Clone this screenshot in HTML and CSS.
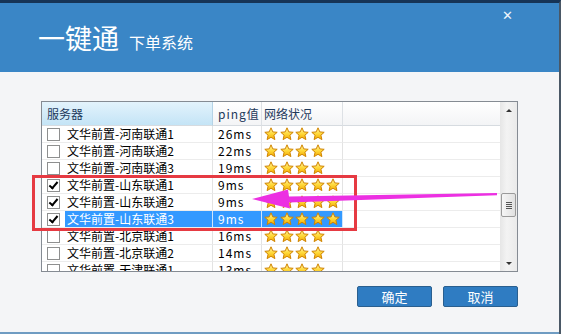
FILE: index.html
```html
<!DOCTYPE html>
<html lang="zh-CN">
<head>
    <meta charset="UTF-8">
    <title>一键通 下单系统</title>
    <link rel="stylesheet" href="styles.css">
</head>
<body>
    <svg width="0" height="0" class="defs">
        <defs>
            <linearGradient id="starFill" x1="0" y1="0" x2="0" y2="1">
                <stop offset="0" stop-color="#fff6a8"/>
                <stop offset="0.5" stop-color="#ffd93a"/>
                <stop offset="1" stop-color="#f2a900"/>
            </linearGradient>
            <symbol id="star" viewBox="0 0 14 14">
                <path d="M7 0.8 L8.8 4.9 L13.2 5.3 L9.9 8.2 L10.9 12.6 L7 10.3 L3.1 12.6 L4.1 8.2 L0.8 5.3 L5.2 4.9 Z" fill="url(#starFill)" stroke="#d08400" stroke-width="1" stroke-linejoin="round"/>
            </symbol>
        </defs>
    </svg>

    <div class="window">
        <div class="titlebar">
            <div class="title">
                <span class="title-main">一键通</span>
                <span class="title-sub">下单系统</span>
            </div>
            <span class="close">&#x2715;</span>
        </div>

        <div class="content">
            <div class="list">
                <div class="list-body">
                    <div class="row head">
                        <div class="cell name sorted">服务器</div>
                        <div class="cell ping">ping值</div>
                        <div class="cell status">网络状况</div>
                        <div class="cell filler"></div>
                    </div>
                    <div id="rows"></div>
                </div>
                <div class="scrollbar">
                    <span class="arrow up"></span>
                    <div class="track">
                        <div class="thumb"><i></i><i></i><i></i><i></i></div>
                    </div>
                    <span class="arrow down"></span>
                </div>
            </div>

            <div class="buttons">
                <button class="button">确定</button>
                <button class="button">取消</button>
            </div>
        </div>

        <div class="highlight"></div>
        <svg class="pointer" width="561" height="334" viewBox="0 0 561 334">
            <polygon points="497,193 497,195.2 289,202.5 290,208.5 252,199 288,189.5 289,196.5" fill="#ec30e2"/>
        </svg>
    </div>

    <script>
        const servers = [
            { name: '文华前置-河南联通1', ping: '26ms', stars: 4, checked: false },
            { name: '文华前置-河南联通2', ping: '22ms', stars: 4, checked: false },
            { name: '文华前置-河南联通3', ping: '19ms', stars: 4, checked: false },
            { name: '文华前置-山东联通1', ping: '9ms', stars: 5, checked: true },
            { name: '文华前置-山东联通2', ping: '9ms', stars: 5, checked: true },
            { name: '文华前置-山东联通3', ping: '9ms', stars: 5, checked: true, selected: true },
            { name: '文华前置-北京联通1', ping: '16ms', stars: 4, checked: false },
            { name: '文华前置-北京联通2', ping: '14ms', stars: 4, checked: false },
            { name: '文华前置-天津联通1', ping: '13ms', stars: 4, checked: false }
        ];

        const rows = document.getElementById('rows');

        servers.forEach(s => {
            const row = document.createElement('div');
            row.className = 'row' + (s.selected ? ' selected' : '');

            let stars = '';
            for (let i = 0; i < s.stars; i++) {
                stars += '<svg class="star"><use href="#star"/></svg>';
            }

            row.innerHTML =
                '<div class="cell name">' +
                    '<span class="check' + (s.checked ? ' on' : '') + '"></span>' +
                    '<span class="label">' + s.name + '</span>' +
                '</div>' +
                '<div class="cell ping">' + s.ping + '</div>' +
                '<div class="cell status">' + stars + '</div>' +
                '<div class="cell filler"></div>';
            rows.appendChild(row);
        });
    </script>
</body>
</html>
```

FILE: styles.css
```css
body {
    margin: 0;
    font-family: "Noto Sans CJK SC", "DejaVu Sans", sans-serif;
    background-color: #1b3550;
}

.defs {
    position: absolute;
}

.window {
    position: relative;
    width: 559px;
    height: 331px;
    border-top: 3px solid #163456;
    border-right: 2px solid #4a5866;
    background-color: #f4f5f7;
    display: flex;
    flex-direction: column;
    overflow: hidden;
}

.window::after {
    content: "";
    position: absolute;
    left: 0;
    right: 0;
    bottom: 0;
    height: 2px;
    background-color: #6f9cc2;
}

.titlebar {
    height: 69px;
    background-color: #3a86c6;
    display: flex;
    justify-content: space-between;
    color: #fff;
}

.title {
    display: flex;
    align-items: baseline;
    gap: 10px;
    padding: 18px 0 0 38px;
}

.title-main {
    font-size: 27px;
    line-height: 34px;
}

.title-sub {
    font-size: 16px;
}

.close {
    font-size: 13px;
    line-height: 13px;
    padding: 5px 46px 0 0;
    color: #eef5fb;
}

.content {
    display: flex;
    flex-direction: column;
    padding: 29px 0 0 41px;
}

.list {
    width: 475px;
    height: 169px;
    border: 1px solid #858b93;
    background-color: #fff;
    display: flex;
    overflow: hidden;
}

.list-body {
    width: 458px;
}

.row {
    display: grid;
    grid-template-columns: 171px 49px 81px 1fr;
    height: 17px;
    font-size: 12px;
    line-height: 16px;
    color: #000;
}

.row.head {
    height: 24px;
    color: #1e395b;
}

.cell {
    display: flex;
    align-items: center;
    border-bottom: 1px solid #ececec;
    border-right: 1px solid #e3e3e3;
    white-space: nowrap;
    overflow: hidden;
}

.head .cell {
    background: linear-gradient(#ffffff, #f3f4f6);
    border-bottom: 1px solid #d6dbe0;
    border-right: 1px solid #dde1e5;
    padding-left: 5px;
}

.head .cell.sorted {
    background: linear-gradient(#e3f3fc, #c4e4f6);
    border-right-color: #b5d3e6;
}

.head .ping {
    padding-left: 4px;
}

.cell.filler {
    border-right: none;
}

.row .name {
    padding-left: 5px;
}

.check {
    width: 11px;
    height: 11px;
    border: 1px solid #8e8f8f;
    background-color: #fff;
    margin-right: 5px;
    position: relative;
    flex-shrink: 0;
}

.check.on::after {
    content: "";
    position: absolute;
    left: 3px;
    top: 0;
    width: 3px;
    height: 7px;
    border: solid #000;
    border-width: 0 2px 2px 0;
    transform: rotate(40deg);
}

.label {
    height: 16px;
    padding: 0 2px;
}

.row .ping {
    padding-left: 5px;
    letter-spacing: 1px;
}

.row .status {
    padding-left: 2px;
    gap: 1.5px;
}

.star {
    width: 14px;
    height: 14px;
    flex-shrink: 0;
}

.row.selected .label {
    background-color: #3399ff;
    color: #fff;
    flex: 1;
    margin-right: -1px;
}

.row.selected .ping,
.row.selected .status {
    background-color: #3399ff;
    color: #fff;
    border-right-color: #cfe5fb;
}

.row.selected .ping {
    border-left: 1px solid #cfe5fb;
    margin-left: -1px;
}

.scrollbar {
    width: 17px;
    display: flex;
    flex-direction: column;
    align-items: center;
    background: linear-gradient(90deg, #e6e6e6, #f3f3f3 40%, #eaeaea);
}

.arrow {
    height: 16px;
    width: 17px;
    display: flex;
    align-items: center;
    justify-content: center;
}

.arrow::before {
    content: "";
    border-left: 3px solid transparent;
    border-right: 3px solid transparent;
}

.arrow.up::before {
    border-bottom: 3px solid #333;
}

.arrow.down::before {
    border-top: 3px solid #333;
}

.track {
    flex: 1;
    width: 17px;
    padding-top: 75px;
    display: flex;
    justify-content: center;
}

.thumb {
    width: 13px;
    height: 22px;
    border: 1px solid #9a9a9a;
    border-radius: 2px;
    background: linear-gradient(90deg, #f6f6f6, #e0e0e0);
    display: flex;
    flex-direction: column;
    align-items: center;
    justify-content: center;
    gap: 1px;
}

.thumb i {
    width: 6px;
    height: 1px;
    background-color: #555;
}

.buttons {
    display: flex;
    justify-content: flex-end;
    gap: 11px;
    width: 477px;
    margin-top: 14px;
}

.button {
    width: 75px;
    height: 21px;
    border: 1px solid #2a5f8f;
    border-radius: 2px;
    background-color: #2f7cc2;
    color: #fff;
    font-family: "Noto Sans CJK SC", sans-serif;
    font-size: 13px;
    line-height: 19px;
    padding: 0;
    cursor: pointer;
}

.highlight {
    position: absolute;
    left: 32px;
    top: 172px;
    width: 319px;
    height: 50px;
    border: 3px solid #e63a42;
    pointer-events: none;
}

.pointer {
    position: absolute;
    left: 0;
    top: -3px;
    pointer-events: none;
}
```
